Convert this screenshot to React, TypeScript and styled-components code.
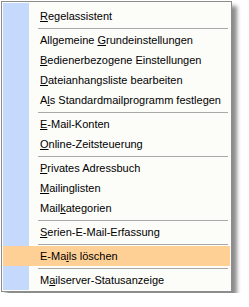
import React from 'react';
import styled, { createGlobalStyle } from 'styled-components';

// '&' marks the accelerator letter, '-' is a separator
const entries: string[] = [
    '&Regelassistent',
    '-',
    'Allgemeine &Grundeinstellungen',
    '&Bedienerbezogene Einstellungen',
    '&Dateianhangsliste bearbeiten',
    'A&ls Standardmailprogramm festlegen',
    '-',
    '&E-Mail-Konten',
    '&Online-Zeitsteuerung',
    '-',
    '&Privates Adressbuch',
    '&Mailinglisten',
    'Mail&kategorien',
    '-',
    '&Serien-E-Mail-Erfassung',
    '-',
    'E-Ma&ils löschen',
    '-',
    'M&ailserver-Statusanzeige',
];

const ACTIVE = 'E-Ma&ils löschen';

const GlobalStyle = createGlobalStyle`
    html, body {
        margin: 0;
        padding: 0;
        background: #ffffff;
    }
`;

const Page = styled.div`
    padding: 1px;
    font-family: Tahoma, 'Liberation Sans', Arial, sans-serif;
    font-size: 11px;
    color: #000;
`;

const Menu = styled.div`
    width: 231px;
    border: 1px solid #8c8c8c;
    background: #fcfcf9;
    padding: 1px;
    box-sizing: border-box;
    box-shadow: 5px 5px 4px rgba(0, 0, 0, 0.45);
`;

const List = styled.ul`
    list-style: none;
    margin: 0;
    padding: 3px 0 0;
    display: flex;
    flex-direction: column;
    background: linear-gradient(to right, #c4d9fb 0, #c4d9fb 26px, #fcfcf9 26px);
`;

const Item = styled.li<{ $active?: boolean }>`
    height: 20px;
    line-height: 20px;
    padding-left: 37px;
    white-space: nowrap;
    background: ${(p) => (p.$active ? '#fed095' : 'transparent')};
`;

const Separator = styled.li`
    height: 4px;
    display: flex;
    align-items: center;
    padding-left: 35px;
    padding-right: 2px;

    &:after {
        content: '';
        flex: 1;
        height: 1px;
        background: #a8a8a8;
    }
`;

const Key = styled.span`
    text-decoration: underline;
`;

const Label = ({ text }: { text: string }) => {
    const i = text.indexOf('&');
    if (i < 0) return <>{text}</>;
    return (
        <>
            {text.slice(0, i)}
            <Key>{text[i + 1]}</Key>
            {text.slice(i + 2)}
        </>
    );
};

const App = () => (
    <>
        <GlobalStyle />
        <Page>
            <Menu>
                <List>
                    {entries.map((e, idx) =>
                        e === '-' ? (
                            <Separator key={idx} />
                        ) : (
                            <Item key={idx} $active={e === ACTIVE}>
                                <Label text={e} />
                            </Item>
                        )
                    )}
                </List>
            </Menu>
        </Page>
    </>
);

export default App;
